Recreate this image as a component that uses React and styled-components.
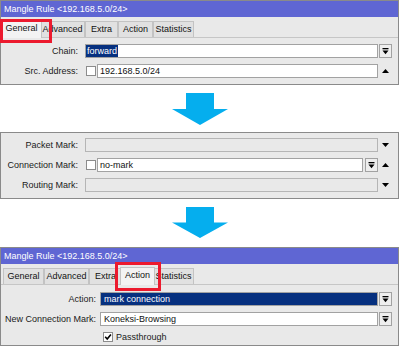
import React from "react";
import styled, { createGlobalStyle } from "styled-components";

const Global = createGlobalStyle`
  html, body { margin: 0; padding: 0; background: #ffffff; }
  body {
    font-family: "Liberation Sans", Arial, sans-serif;
    font-size: 9px;
    color: #111111;
  }
`;

const Page = styled.div`
  width: 400px;
  height: 347px;
  display: flex;
  flex-direction: column;
  overflow: hidden;
`;

const Window = styled.div`
  position: relative;
  width: 399px;
  box-sizing: border-box;
  border: 1px solid #8a8a8a;
  background: #e9e9e9;
  flex-shrink: 0;
`;

const TitleBar = styled.div`
  height: 16px;
  background: #5f66d3;
  color: #ffffff;
  line-height: 17px;
  padding-left: 3px;
  white-space: pre;
`;

const TabStrip = styled.div`
  height: 21px;
  box-sizing: border-box;
  display: flex;
  align-items: flex-end;
  padding-left: 2px;
  border-bottom: 1px solid #c6c6c6;
`;

const Tab = styled.div`
  position: relative;
  width: ${(p) => p.$w}px;
  height: ${(p) => (p.$active ? 18 : 16)}px;
  box-sizing: border-box;
  margin: ${(p) => (p.$active ? "0 -2px -1px" : "0")};
  border: 1px solid #c3c3c3;
  border-bottom: none;
  background: ${(p) => (p.$active ? "#f3f3f3" : "#e1e1e1")};
  z-index: ${(p) => (p.$active ? 1 : 0)};
  text-align: center;
  line-height: ${(p) => (p.$active ? 14 : 15)}px;
  white-space: nowrap;
`;

const Body = styled.div`
  display: flex;
  flex-direction: column;
  gap: 6px;
  padding: ${(p) => p.$pt}px 0 ${(p) => p.$pb}px;
`;

const Row = styled.div`
  display: flex;
  align-items: center;
  height: ${(p) => p.$h || 14}px;
`;

const Label = styled.div`
  width: ${(p) => p.$w}px;
  margin-right: ${(p) => p.$gap}px;
  flex-shrink: 0;
  text-align: right;
  white-space: nowrap;
  color: #1a1a1a;
`;

const Controls = styled.div`
  flex: 1;
  min-width: 0;
  height: 100%;
  display: flex;
  align-items: center;
`;

const Trailing = styled.div`
  width: 20px;
  height: 100%;
  flex-shrink: 0;
  display: flex;
  align-items: center;
  padding-left: ${(p) => p.$pl}px;
  box-sizing: border-box;
`;

const Field = styled.div`
  flex: 1;
  min-width: 0;
  height: 14px;
  box-sizing: border-box;
  border: 1px solid ${(p) => (p.$disabled ? "#b5b5b5" : "#a2a2a2")};
  background: ${(p) =>
    p.$disabled ? "#e9e9e9" : p.$selected ? "#06307f" : "#ffffff"};
  color: ${(p) => (p.$selected ? "#ffffff" : "#111111")};
  padding-left: ${(p) => (p.$pl != null ? p.$pl : 3)}px;
  line-height: 12px;
  white-space: nowrap;
  overflow: hidden;
`;

const Selection = styled.span`
  display: inline-block;
  background: #06307f;
  color: #ffffff;
  padding: 0 1px;
  height: 12px;
`;

const Check = styled.div`
  width: 10px;
  height: 10px;
  box-sizing: border-box;
  border: 1px solid #8c8c8c;
  background: #ffffff;
  margin: 0 ${(p) => p.$mr ?? 1}px 0 ${(p) => p.$ml ?? 1}px;
  flex-shrink: 0;
  display: flex;
  align-items: center;
  justify-content: center;
`;

const DropButton = styled.div`
  width: 13px;
  height: 14px;
  box-sizing: border-box;
  border: 1px solid #a2a2a2;
  background: #eeeeee;
  margin-left: ${(p) => p.$ml}px;
  flex-shrink: 0;
  display: flex;
  align-items: center;
  justify-content: center;
`;

const CheckText = styled.span`
  white-space: nowrap;
  color: #1a1a1a;
`;

const ArrowWrap = styled.div`
  height: ${(p) => p.$h}px;
  margin: ${(p) => p.$mt}px 0 ${(p) => p.$mb}px;
  display: flex;
  justify-content: center;
  flex-shrink: 0;
`;

const Highlight = styled.div`
  position: absolute;
  left: ${(p) => p.$x}px;
  top: ${(p) => p.$y}px;
  width: ${(p) => p.$w}px;
  height: ${(p) => p.$h}px;
  box-sizing: border-box;
  border: 3px solid #ec1a2e;
  z-index: 5;
  pointer-events: none;
`;

const DropIcon = () => (
  <svg width="7" height="7" viewBox="0 0 7 7">
    <rect x="0.5" y="0" width="6" height="1.3" fill="#000" />
    <polygon points="0.5,2.5 6.5,2.5 3.5,6.3" fill="#000" />
  </svg>
);

const Tri = ({ up }) => (
  <svg width="7" height="4" viewBox="0 0 7 4">
    <polygon points={up ? "0,4 7,4 3.5,0" : "0,0 7,0 3.5,4"} fill="#000" />
  </svg>
);

const Tick = () => (
  <svg width="8" height="8" viewBox="0 0 8 8">
    <polyline
      points="1.2,3.8 3.2,6 6.9,1.4"
      fill="none"
      stroke="#000"
      strokeWidth="1.6"
    />
  </svg>
);

const BigArrow = ({ h }) => (
  <svg width="56" height={h} viewBox={`0 0 56 ${h}`}>
    <polygon
      points={`14,0 42,0 42,${h / 2} 56,${h / 2} 28,${h} 0,${h / 2} 14,${h / 2}`}
      fill="#05aeee"
    />
  </svg>
);

const tabs = [
  { name: "General", w: 41 },
  { name: "Advanced", w: 45 },
  { name: "Extra", w: 33 },
  { name: "Action", w: 35 },
  { name: "Statistics", w: 41 },
];

const Tabs = ({ active }) => (
  <TabStrip>
    {tabs.map((t) => (
      <Tab key={t.name} $w={t.w} $active={t.name === active}>
        {t.name}
      </Tab>
    ))}
  </TabStrip>
);

export default function App() {
  return (
    <Page>
      <Global />
      <Window>
        <TitleBar>Mangle Rule &lt;192.168.5.0/24&gt;</TitleBar>
        <Tabs active="General" />
        <Body $pt={6} $pb={6}>
          <Row>
            <Label $w={77} $gap={7}>Chain:</Label>
            <Controls>
              <Field $pl={0}>
                <Selection>forward</Selection>
              </Field>
            </Controls>
            <Trailing $pl={1}>
              <DropButton $ml={0}>
                <DropIcon />
              </DropButton>
            </Trailing>
          </Row>
          <Row>
            <Label $w={77} $gap={7}>Src. Address:</Label>
            <Controls>
              <Check />
              <Field $pl={2}>192.168.5.0/24</Field>
            </Controls>
            <Trailing $pl={4}>
              <Tri up />
            </Trailing>
          </Row>
        </Body>
        <Highlight $x={-1} $y={18} $w={52} $h={24} />
      </Window>

      <ArrowWrap $h={32} $mt={8} $mb={7}>
        <BigArrow h={32} />
      </ArrowWrap>

      <Window>
        <Body $pt={5} $pb={6}>
          <Row>
            <Label $w={77} $gap={7}>Packet Mark:</Label>
            <Controls>
              <Field $disabled />
            </Controls>
            <Trailing $pl={4}>
              <Tri />
            </Trailing>
          </Row>
          <Row>
            <Label $w={77} $gap={7}>Connection Mark:</Label>
            <Controls>
              <Check />
              <Field $pl={2}>no-mark</Field>
              <DropButton $ml={2}>
                <DropIcon />
              </DropButton>
            </Controls>
            <Trailing $pl={4}>
              <Tri up />
            </Trailing>
          </Row>
          <Row>
            <Label $w={77} $gap={7}>Routing Mark:</Label>
            <Controls>
              <Field $disabled />
            </Controls>
            <Trailing $pl={4}>
              <Tri />
            </Trailing>
          </Row>
        </Body>
      </Window>

      <ArrowWrap $h={31} $mt={8} $mb={9}>
        <BigArrow h={31} />
      </ArrowWrap>

      <Window>
        <TitleBar>Mangle Rule &lt;192.168.5.0/24&gt;</TitleBar>
        <Tabs active="Action" />
        <Body $pt={7} $pb={3}>
          <Row>
            <Label $w={95} $gap={4}>Action:</Label>
            <Controls>
              <Field $selected>mark connection</Field>
            </Controls>
            <Trailing $pl={1}>
              <DropButton $ml={0}>
                <DropIcon />
              </DropButton>
            </Trailing>
          </Row>
          <Row>
            <Label $w={95} $gap={4}>New Connection Mark:</Label>
            <Controls>
              <Field>Koneksi-Browsing</Field>
            </Controls>
            <Trailing $pl={1}>
              <DropButton $ml={0}>
                <DropIcon />
              </DropButton>
            </Trailing>
          </Row>
          <Row $h={10}>
            <Label $w={95} $gap={4} />
            <Controls>
              <Check $ml={3} $mr={3}>
                <Tick />
              </Check>
              <CheckText>Passthrough</CheckText>
            </Controls>
          </Row>
        </Body>
        <Highlight $x={114} $y={14} $w={46} $h={29} />
      </Window>
    </Page>
  );
}
